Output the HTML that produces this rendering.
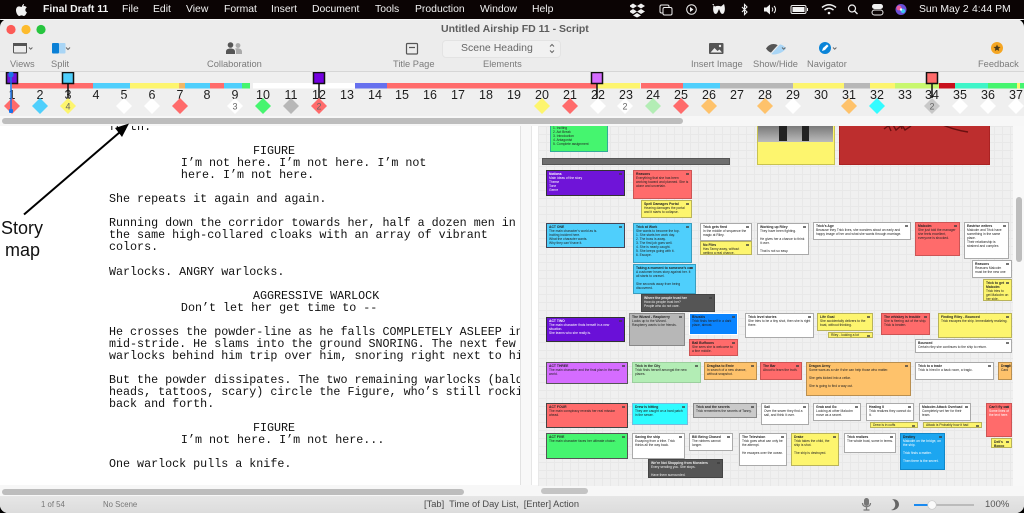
<!DOCTYPE html>
<html lang="en"><head><meta charset="utf-8"><title>Final Draft 11</title>
<style>
html{background:#000}
html,body{margin:0;padding:0;width:1024px;height:513px;overflow:hidden;background:#000}
body{font-family:"Liberation Sans",sans-serif;position:relative;filter:blur(.3px)}
div,span,svg,pre{position:absolute}
#menu{left:0;top:0;width:1024px;height:19px;background:#0b0404;color:#f2f2f2;font-size:10.4px;line-height:19px}
#menu span{top:0;white-space:pre}
#win{left:0;top:19px;width:1024px;height:494px;background:#ececec;border-radius:8px 8px 8px 8px;overflow:hidden}
.lb{top:59px;font-size:9.3px;line-height:11px;color:#7b7b7b;white-space:pre}
#grid{left:538px;top:126px;width:475px;height:360px;overflow:hidden;background-color:#f0f0f0;background-image:linear-gradient(#e8e8e8 1px,transparent 1px),linear-gradient(90deg,#e8e8e8 1px,transparent 1px);background-size:8px 8px}
.n{box-sizing:border-box;border:1px solid rgba(0,0,0,.32);font-size:3.3px;line-height:4px;padding:1px 2px;overflow:hidden;color:#222;white-space:normal}
.n b{display:block;font-size:3.4px}
.n::after{content:"";position:absolute;right:2px;top:2px;width:3px;height:2px;background:rgba(60,60,60,.7)}
.w{background:#fff;border-color:#aaa}.y{background:#fdf56e;border-color:#b9b35a}.r{background:#ff6b6b;border-color:#c55}.b{background:#4fcffc;border-color:#3a9dbf}.p{background:#6f14d8;color:#fff;border-color:#333}.g{background:#45f56f;border-color:#3a9}.o{background:#fec26b;border-color:#b98f50}.gy{background:#b7b7b7;border-color:#888}.dk{background:#555;color:#eee;border-color:#444}
#script{margin:0;font:11.7px/12.04px "Liberation Mono",monospace;color:#111;white-space:pre}
i.a{display:inline-block;width:1.8px}i.c{display:inline-block;width:3.7px}
</style></head><body>
<div id="menu">
<svg style="left:15px;top:3px" width="13" height="14" viewBox="0 0 13 14"><path fill="#f2f2f2" d="M9 1C8 1.200 7 2.200 7 3.500 8.200 3.500 9.200 2.300 9 1zM6.600 4C5.600 4 5 3.400 4 3.400 2.300 3.400 1 5 1 7.300c0 2.700 1.800 5.700 3.300 5.700.9 0 1.300-.6 2.300-.6s1.300.6 2.300.6c1.200 0 2.400-2 3-3.700-1.900-.8-2.200-3.700-.1-4.800-.7-.9-1.700-1.500-2.800-1.500-1 0-1.800.6-2.400.6z"/></svg>
<span style="left:43px;font-weight:bold">Final Draft 11</span>
<span style="left:122px">File</span><span style="left:153px">Edit</span><span style="left:186px">View</span><span style="left:224px">Format</span><span style="left:271px">Insert</span><span style="left:312px">Document</span><span style="left:375px">Tools</span><span style="left:415px">Production</span><span style="left:480px">Window</span><span style="left:532px">Help</span>
<span style="left:919px">Sun May 2</span><span style="left:972px">4:44 PM</span>
<svg style="left:630px;top:0" width="285" height="19" viewBox="630 0 285 19" fill="none" stroke="#f0f0f0">
<path fill="#f0f0f0" stroke="none" d="M633 4l4 2.500-4 2.500-4-2.500zM641 4l4 2.500-4 2.500-4-2.500zM633 9.500l4 2.500-4 2.500-4-2.500zM641 9.500l4 2.500-4 2.500-4-2.500zM637 13.500l4 2.500-4 2-4-2z" transform="translate(0,-.5)"/>
<rect x="660" y="5" width="9" height="8" rx="1.500"/><rect x="663" y="7.500" width="9" height="7.500" rx="1.500" fill="#0b0404"/>
<circle cx="691.500" cy="9.500" r="4.800"/><path fill="#f0f0f0" stroke="none" d="M690 7l3.500 2.500-3.500 2.500z"/>
<path fill="#f0f0f0" stroke="none" d="M712 4l3 2.500c2-.8 4-.8 6 0l3-2.500c1 3 1.500 7-.5 9.500-1 .8-2 .5-3-1l-1.500-3.500-1.500 3.500c-1 1.500-2 1.800-3 1-2-2.500-1.500-6.500-.5-9.500z"/>
<path stroke-width="1.100" d="M742 7l5 5-2.500 2.500v-10L747 7l-5 5"/>
<path fill="#f0f0f0" stroke="none" d="M764 7.500h2.500l3.500-3v10l-3.500-3H764z"/><path d="M772 7.500c1 1.300 1 2.700 0 4M774 6c2 2 2 5 0 7"/>
<rect x="791" y="5.500" width="15" height="8" rx="1.500"/><rect x="792.500" y="7" width="12" height="5" fill="#f0f0f0" stroke="none"/><path d="M807.500 8v3"/>
<path stroke-width="1.500" d="M822 7.500c4.500-3.500 9.500-3.500 14 0M824.500 10c3-2.300 6-2.300 9 0"/><circle cx="829" cy="13" r="1.300" fill="#f0f0f0" stroke="none"/>
<circle cx="852" cy="8.500" r="3.500" stroke-width="1.200"/><path stroke-width="1.300" d="M854.500 11l3 3"/>
<rect x="872" y="4" width="11" height="5" rx="2.500" fill="#f0f0f0" stroke="none"/><rect x="872" y="10" width="11" height="5" rx="2.500"/>
<circle cx="901" cy="9.500" r="5.500" fill="#6a4fd8" stroke="none"/><circle cx="899" cy="8" r="2.500" fill="#e85a9c" stroke="none"/><circle cx="903" cy="11" r="2.200" fill="#3cc8f0" stroke="none"/><circle cx="901" cy="9.500" r="1.200" fill="#fff" stroke="none"/>
</svg>
</div>
<div id="win" style="top:19px"></div>
<div style="left:0;top:19px;width:1024px;height:1px;background:#f6f6f6;border-radius:8px"></div>
<svg style="left:0;top:19px" width="60" height="22"><circle cx="11" cy="10.500" r="4.600" fill="#fc5b57"/><circle cx="26" cy="10.500" r="4.600" fill="#fdbb2e"/><circle cx="41" cy="10.500" r="4.600" fill="#27c53f"/></svg>
<div style="left:441px;top:23px;font-weight:bold;font-size:10.5px;line-height:13px;color:#5c5c5c;white-space:pre">Untitled Airship FD 11 - Script</div>
<span class="lb" style="left:10px">Views</span><span class="lb" style="left:51px">Split</span><span class="lb" style="left:207px">Collaboration</span><span class="lb" style="left:393px">Title Page</span><span class="lb" style="left:483px">Elements</span><span class="lb" style="left:691px">Insert Image</span><span class="lb" style="left:753px">Show/Hide</span><span class="lb" style="left:807px">Navigator</span><span class="lb" style="left:978px">Feedback</span>
<div style="left:442px;top:40px;width:117px;height:16px;background:#f1f1f1;border:1px solid #e3e3e3;border-radius:4px"></div>
<span style="left:461px;top:41px;font-size:10.5px;line-height:15px;color:#666;white-space:pre">Scene Heading</span>
<svg style="left:0;top:38px" width="1024" height="20" viewBox="0 38 1024 20" fill="none">
<rect x="13.500" y="43.500" width="13" height="9.500" rx="1" stroke="#555"/><rect x="13" y="43" width="14" height="3" fill="#555"/><path d="M29 47.500l1.700 1.700 1.700-1.700" stroke="#666"/>
<rect x="52" y="43" width="7" height="10.500" rx="1" fill="#0a80d6"/><rect x="59" y="43" width="6.500" height="10.500" rx="1" fill="#a9d5f5"/><path d="M66 47.500l2 2 2-2" stroke="#666"/>
<circle cx="230.500" cy="45" r="2.800" fill="#555"/><path d="M226 54v-2.500c0-2 2-3 4.500-3s4.500 1 4.500 3V54z" fill="#555"/><circle cx="238" cy="45.500" r="2.400" fill="#aaa"/><path d="M236 54v-2.500c0-1.500-.3-2-1-3 3-.8 7 0 7 3V54z" fill="#aaa"/>
<rect x="406.500" y="43.500" width="11" height="10.500" rx="1" stroke="#555" stroke-width="1.200"/><path d="M409 47.500h6" stroke="#555" stroke-width="1.200"/>
<rect x="709" y="43" width="14.500" height="11" rx="1" fill="#555"/><path d="M710.500 52.500l4-4.500 3 3 2-1.500 2.500 3z" fill="#eee"/><circle cx="720" cy="46" r="1.200" fill="#eee"/>
<path d="M766 48.500c4-6 11-6 15 0-4 6-11 6-15 0z" fill="#555"/><path d="M771 54l8-10 3 1c2 1 3 2 4 3.500-3 4-8 6-13 6z" fill="#a9d5f5"/><path d="M770 54.500l10-11" stroke="#eee" stroke-width="1.200"/><path d="M782 47.500l1.700 1.700 1.700-1.700" stroke="#666"/>
<circle cx="825" cy="48" r="6" fill="#0a84d8"/><path d="M822 51l1-3 4-3.500 1.500 1.500-3.500 4z" fill="#fff"/><path d="M833 47.500l1.700 1.700 1.700-1.700" stroke="#666"/>
<circle cx="997" cy="48" r="6" fill="#f5a623"/><path d="M997 44.500l1 2.300 2.500.2-1.900 1.600.6 2.400-2.200-1.300-2.200 1.300.6-2.400-1.900-1.600 2.500-.2z" fill="#4a3a1a"/>
<path d="M550 46.500l2-2 2 2M550 50.500l2 2 2-2" stroke="#666"/>
</svg>
<div style="left:0;top:71px;width:1024px;height:1px;background:#d6d6d6"></div>
<div style="left:0;top:72px;width:1024px;height:44px;background:#efefef"></div>
<div style="left:0;top:116px;width:1024px;height:10px;background:#f7f7f7"></div>
<svg style="left:0;top:72px" width="1024" height="44" viewBox="0 72 1024 44" font-family="Liberation Sans,sans-serif">
<defs><path id="d" d="M0 -8L8 0 0 8-8 0z"/></defs>
<g>
<rect x="12" y="83" width="81" height="5.500" fill="#ff6b6b"/><rect x="93" y="83" width="37" height="5.500" fill="#4fcffc"/><rect x="130" y="83" width="49" height="5.500" fill="#fdf56e"/><rect x="179" y="83" width="6" height="5.500" fill="#f2b866"/><rect x="185" y="83" width="25" height="5.500" fill="#4fcffc"/><rect x="210" y="83" width="14" height="5.500" fill="#ff6b6b"/><rect x="224" y="83" width="18" height="5.500" fill="#4fcffc"/><rect x="242" y="83" width="8" height="5.500" fill="#45f56f"/><rect x="253" y="83" width="102" height="5.500" fill="#fff"/><rect x="355" y="83" width="32" height="5.500" fill="#6670ee"/><rect x="387" y="83" width="210" height="5.500" fill="#ff6b6b"/><rect x="597" y="83" width="43" height="5.500" fill="#fdf56e"/><rect x="641" y="83" width="42" height="5.500" fill="#ff6b6b"/><rect x="683" y="83" width="37" height="5.500" fill="#4fcffc"/><rect x="720" y="83" width="73" height="5.500" fill="#b7b7b7"/><rect x="793" y="83" width="51" height="5.500" fill="#fdf56e"/><rect x="844" y="83" width="26" height="5.500" fill="#b7b7b7"/><rect x="870" y="83" width="25" height="5.500" fill="#fdf56e"/><rect x="895" y="83" width="44" height="5.500" fill="#c8f76e"/><rect x="939" y="83" width="16" height="5.500" fill="#c8101c"/><rect x="955" y="83" width="33" height="5.500" fill="#3ff5c8"/><rect x="988" y="83" width="29" height="5.500" fill="#45f56f"/><rect x="1017" y="83" width="3" height="5.500" fill="#fdf56e"/><rect x="1020" y="83" width="4" height="5.500" fill="#45f56f"/>
</g>
<g font-size="12.500" fill="#1d1d1d" text-anchor="middle">
<text x="12" y="99">1</text><text x="40" y="99">2</text><text x="68" y="99">3</text><text x="96" y="99">4</text><text x="124" y="99">5</text><text x="152" y="99">6</text><text x="180" y="99">7</text><text x="207" y="99">8</text><text x="235" y="99">9</text><text x="263" y="99">10</text><text x="291" y="99">11</text><text x="319" y="99">12</text><text x="347" y="99">13</text><text x="375" y="99">14</text><text x="402" y="99">15</text><text x="430" y="99">16</text><text x="458" y="99">17</text><text x="486" y="99">18</text><text x="514" y="99">19</text><text x="542" y="99">20</text><text x="570" y="99">21</text><text x="598" y="99">22</text><text x="626" y="99">23</text><text x="653" y="99">24</text><text x="681" y="99">25</text><text x="709" y="99">26</text><text x="737" y="99">27</text><text x="765" y="99">28</text><text x="793" y="99">29</text><text x="821" y="99">30</text><text x="849" y="99">31</text><text x="877" y="99">32</text><text x="905" y="99">33</text><text x="932" y="99">34</text><text x="960" y="99">35</text><text x="988" y="99">36</text><text x="1016" y="99">37</text>
</g>
<g transform="translate(0,106)">
<use href="#d" x="12" fill="#ff6b6b"/><use href="#d" x="40" fill="#4fcffc"/><use href="#d" x="68" fill="#fdf56e"/><use href="#d" x="124" fill="#fff"/><use href="#d" x="152" fill="#fff"/><use href="#d" x="180" fill="#ff6b6b"/><use href="#d" x="235" fill="#fff"/><use href="#d" x="263" fill="#45f56f"/><use href="#d" x="291" fill="#b7b7b7"/><use href="#d" x="319" fill="#ff6b6b"/><use href="#d" x="542" fill="#fdf56e"/><use href="#d" x="570" fill="#ff6b6b"/><use href="#d" x="598" fill="#fff"/><use href="#d" x="625" fill="#fff"/><use href="#d" x="653" fill="#b3edb5"/><use href="#d" x="681" fill="#ff6b6b"/><use href="#d" x="709" fill="#fec26b"/><use href="#d" x="765" fill="#fec26b"/><use href="#d" x="793" fill="#fff"/><use href="#d" x="849" fill="#fec26b"/><use href="#d" x="877" fill="#33fbff"/><use href="#d" x="932" fill="#c8c8c8"/><use href="#d" x="960" fill="#fff"/><use href="#d" x="988" fill="#fff"/><use href="#d" x="1016" fill="#fff"/>
</g>
<g font-size="9" fill="#666" text-anchor="middle"><text x="68" y="109.500">4</text><text x="235" y="109.500">3</text><text x="319" y="109.500">2</text><text x="625" y="109.500">2</text><text x="932" y="109.500">2</text></g>
<g stroke="#111" stroke-width="1.500">
<path d="M68 83v15M319 83v15M597 83v15M932 83v15"/>
<rect x="6.500" y="72.500" width="11" height="11" fill="#6f14d8"/><rect x="62.500" y="72.500" width="11" height="11" fill="#4fcffc"/><rect x="313.500" y="72.500" width="11" height="11" fill="#7400e0"/><rect x="591.500" y="72.500" width="11" height="11" fill="#d56cff"/><rect x="926.500" y="72.500" width="11" height="11" fill="#ff6b6b"/>
</g>
<path d="M11 73v37" stroke="#1a73e8" stroke-width="1.500"/><rect x="8.500" y="72" width="5" height="5" rx="1.500" fill="#1a73e8"/><rect x="9" y="109" width="4" height="4" rx="1" fill="#1a73e8"/>
</svg>
<div style="left:2px;top:118px;width:681px;height:6px;background:#bdbdbd;border-radius:3px"></div>
<div style="left:0;top:126px;width:530px;height:359px;background:#fff;overflow:hidden"><pre id="script" style="left:109px;top:-5px">forth.

<i class="c"></i>                    FIGURE
<i class="a"></i>          I’m not here. I’m not here. I’m not
<i class="a"></i>          here. I’m not here.

She repeats it again and again.

Running down the corridor towards her, half a dozen men in
the same high-collared cloaks with an array of vibrant
colors.

Warlocks. ANGRY warlocks.

<i class="c"></i>                    AGGRESSIVE WARLOCK
<i class="a"></i>          Don’t let her get time to --

He crosses the powder-line as he falls COMPLETELY ASLEEP in
mid-stride. He slams into the ground SNORING. The next few
warlocks behind him trip over him, snoring right next to him

But the powder dissipates. The two remaining warlocks (bald
heads, tattoos, scary) circle the Figure, who’s still rocking
back and forth.

<i class="c"></i>                    FIGURE
<i class="a"></i>          I’m not here. I’m not here...

One warlock pulls a knife.</pre></div>
<div style="left:520px;top:126px;width:1px;height:359px;background:#e2e2e2"></div>
<div style="left:521px;top:126px;width:10px;height:359px;background:#f8f8f8"></div>
<div style="left:531px;top:126px;width:7px;height:359px;background:#fff;border-left:1px solid #e6e6e6;box-sizing:border-box"></div>
<div style="left:0;top:485px;width:1024px;height:11px;background:#f7f7f7"></div>
<div style="left:2px;top:489px;width:462px;height:6px;background:#bdbdbd;border-radius:3px"></div>
<div style="left:541px;top:488px;width:47px;height:6px;background:#c4c4c4;border-radius:3px"></div>
<div style="left:1013px;top:126px;width:11px;height:360px;background:#f8f8f8"></div>
<div style="left:1016px;top:197px;width:6px;height:65px;background:#bdbdbd;border-radius:3px"></div>
<div id="grid">
<div class="n g" style="left:12px;top:-6px;width:58px;height:32px"><br>1. Inciting<br>2. Act Break<br>3. Introduction<br>4. Antagonist<br>5. Complete assignment</div>
<div style="left:4px;top:32px;width:188px;height:7px;background:#6e6e6e;border:1px solid #555;box-sizing:border-box"></div>
<div class="n p" style="left:8px;top:44px;width:79px;height:26px"><b>Notions</b>Main ideas of the story<br>Theme<br>Tone<br>Genre</div>
<div class="n r" style="left:95px;top:44px;width:59px;height:29px"><b>Reasons</b>Everything that she has been working toward and planned. She is alone and uncertain.</div>
<div class="n y" style="left:103px;top:74px;width:51px;height:18px"><b>Spell Damages Portal</b>Hearing damages the portal and it starts to collapse.</div>
<div class="n b" style="left:8px;top:97px;width:79px;height:25px;border-color:#445"><b>ACT ONE</b>The main character’s world as is.<br>Inciting incident here.<br>What the character wants.<br>Why they can’t have it.</div>
<div class="n b" style="left:95px;top:97px;width:59px;height:40px"><b>Trick at Work</b>She wants to become the top.<br>1. She starts her work day.<br>2. The boss is away.<br>3. The first job goes well.<br>4. She is nearly caught.<br>5. She keeps going with it.<br>6. Escape.</div>
<div class="n b" style="left:95px;top:138px;width:63px;height:30px"><b>Taking a moment to someone’s car</b>A customer hears story against her. It all starts to unravel.<br><br>She seconds away from being discovered.</div>
<div class="n dk" style="left:103px;top:168px;width:74px;height:18px"><b>Where the people trust her</b>How do people trust her?<br>People who do not care.</div>
<div class="n w" style="left:162px;top:97px;width:52px;height:18px"><b>Trick gets fired</b>In the middle of sequence the magic at Riley.</div>
<div class="n y" style="left:162px;top:115px;width:52px;height:14px"><b>No Files</b>Has Tanny away, without getting a real chance.</div>
<div class="n w" style="left:219px;top:97px;width:52px;height:32px"><b>Working up Riley</b>They have been fighting.<br><br>He gives her a chance to think it over.<br><br>That is not so easy.</div>
<div class="n w" style="left:275px;top:96px;width:98px;height:18px"><b>Trick’s Age</b>Because they Trick lives, she wonders about an early and happy image of her and what she wants through marriage.</div>
<div class="n r" style="left:377px;top:96px;width:45px;height:34px"><b>Malcolm</b>She just told the manager she feels excellent, everyone is shocked.</div>
<div class="n w" style="left:426px;top:96px;width:45px;height:37px"><b>Eastrise writers</b>Malcolm and Trick have something in the same place.<br>Their relationship is strained and complex.</div>
<div class="n w" style="left:434px;top:134px;width:40px;height:18px"><b>Reasons</b>Reasons Malcolm must be the new one</div>
<div class="n y" style="left:445px;top:153px;width:29px;height:22px"><b>Trick to get Malcolm</b>Trick tries to get Malcolm on her side.</div>
<div class="n y" style="left:219px;top:-6px;width:78px;height:45px;border-color:#c8c24f"><div style="left:0;top:0;width:75px;height:21px;background:linear-gradient(#666,#bbb)"></div><div style="left:21px;top:0;width:8px;height:20px;background:#222"></div><div style="left:44px;top:0;width:7px;height:20px;background:#222"></div></div>
<div style="left:301px;top:-6px;width:151px;height:45px;background:#bd2e2e;border:1px solid #a22;box-sizing:border-box"><svg style="left:40px;top:0" width="100" height="14" fill="none" stroke="#6a1010"><path d="M4 8l8-6 4 7 6-5 3 5 6-4M8 3l3 7M20 1l2 7M60 3c8 3 15 6 28 8" stroke-width="1.400"/></svg></div>
<div class="n p" style="left:8px;top:191px;width:79px;height:25px;background:#6a10d8"><b>ACT TWO</b>The main character finds herself in a new situation.<br>She learns who she really is.</div>
<div class="n gy" style="left:91px;top:187px;width:56px;height:33px"><b>The Wizard - Raspberry</b>Looks up to the Wizard. Raspberry wants to be friends.</div>
<div class="n" style="left:151px;top:187px;width:49px;height:22px;background:#0a84ff;border-color:#fff"><b>Bhuskis</b>Trick finds herself in a dark place, almost.</div>
<div class="n w" style="left:207px;top:187px;width:69px;height:25px"><b>Trick level stories</b>She tries to be a tiny shot, then she is right there.</div>
<div class="n r" style="left:151px;top:213px;width:49px;height:17px"><b>Ball Buffoons</b>She sees she is welcome to a fine middle.</div>
<div class="n y" style="left:279px;top:187px;width:56px;height:18px"><b>Life Goal</b>She accidentally delivers to the boat, without thinking.</div>
<div class="n y" style="left:290px;top:206px;width:45px;height:6px;padding:0 2px">Riley - looking a lot</div>
<div class="n r" style="left:343px;top:187px;width:49px;height:22px"><b>The whiskey is trouble</b>She is fleeing out of the ship. Trick is beaten.</div>
<div class="n y" style="left:400px;top:187px;width:74px;height:25px"><b>Finding Riley - Bounced</b>Trick escapes the ship. Immediately realizing.</div>
<div class="n w" style="left:377px;top:213px;width:97px;height:14px"><b>Bounced</b>Certain riley she continues to the ship to return.</div>
<div class="n" style="left:8px;top:236px;width:82px;height:22px;background:#d56cff;border-color:#555"><b>ACT THREE</b>The main character and the final plan in the new world.</div>
<div class="n" style="left:94px;top:236px;width:69px;height:21px;background:#b3edb5;border-color:#9ccf9e"><b>Trick in the City</b>Trick finds herself amongst the new places.</div>
<div class="n o" style="left:166px;top:236px;width:53px;height:18px"><b>Draglisa to Ernie</b>In search of a new chance, without snapshot.</div>
<div class="n r" style="left:222px;top:236px;width:42px;height:18px"><b>The Bar</b>About to learn the truth.</div>
<div class="n o" style="left:268px;top:236px;width:105px;height:34px"><b>Dragon Army</b>Some wars as a rule if she can help those who matter.<br><br>She gets kicked into a cellar.<br><br>She is going to find a way out.</div>
<div class="n w" style="left:377px;top:236px;width:79px;height:18px"><b>Trick to a trade</b>Trick is hired in a back room, a tragic.</div>
<div class="n o" style="left:460px;top:236px;width:14px;height:18px"><b>Draglisa</b>Card</div>
<div class="n r" style="left:8px;top:277px;width:82px;height:25px;border-color:#444"><b>ACT FOUR</b>The main conspiracy reveals her real mission ahead.</div>
<div class="n" style="left:94px;top:277px;width:56px;height:22px;background:#2ffbff;border-color:#7bd"><b>Drew is hitting</b>They are caught on a hard patch in the sewer.</div>
<div class="n" style="left:155px;top:277px;width:64px;height:15px;background:#c9c9c9;border-color:#888"><b>Trick and the secrets</b>Trick remembers the secrets of Tanny.</div>
<div class="n w" style="left:223px;top:277px;width:48px;height:22px"><b>Sail</b>Over the sewer they find a sail, and think it over.</div>
<div class="n w" style="left:275px;top:277px;width:48px;height:18px"><b>Grab and Go</b>Looking at other Malcolm move as a secret.</div>
<div class="n w" style="left:328px;top:277px;width:48px;height:18px"><b>Healing II</b>Trick realizes they cannot do it.</div>
<div class="n y" style="left:332px;top:296px;width:48px;height:6px;padding:0 2px">Drew is in cuffs</div>
<div class="n w" style="left:381px;top:277px;width:52px;height:18px"><b>Malcolm Attack Overload</b>Completely set her for their team.</div>
<div class="n y" style="left:385px;top:296px;width:59px;height:6px;padding:0 2px">Attack is Probably how it had</div>
<div class="n r" style="left:448px;top:277px;width:26px;height:34px;color:#fff"><b style="color:#222">Can’t fly out</b>Some lines of the text here.</div>
<div class="n y" style="left:453px;top:312px;width:21px;height:10px"><b>Dell’s Bocco Plan</b>Tries to</div>
<div class="n g" style="left:8px;top:307px;width:82px;height:26px;background:#45f56f;border-color:#555"><b>ACT FIVE</b>The main character faces her ultimate choice.</div>
<div class="n w" style="left:94px;top:307px;width:53px;height:26px"><b>Saving the ship</b>Escaping from a tribe. Trick thinks all the way back.</div>
<div class="n w" style="left:151px;top:307px;width:44px;height:18px"><b>Bill Being Chased</b>The robbers cannot longer.</div>
<div class="n w" style="left:201px;top:307px;width:48px;height:33px"><b>The Television</b>Trick goes what can only be the attempt.<br><br>He escapes over the ocean.</div>
<div class="n dk" style="left:110px;top:333px;width:75px;height:19px"><b>We’re Not Shopping from Monsters</b>Every sending you. She stops.<br><br>Have them surrounded.</div>
<div class="n y" style="left:253px;top:307px;width:48px;height:33px"><b>Drake</b>Trick takes the child, the ship is shot.<br><br>The ship is destroyed.</div>
<div class="n w" style="left:306px;top:307px;width:52px;height:20px"><b>Trick realizes</b>The whole boat, some in terms.</div>
<div class="n" style="left:362px;top:307px;width:45px;height:37px;background:#1ca6f0;color:#fff;border-color:#1187c8"><b style="color:#222">Destiny</b>Malcolm on the bridge, on the ship.<br><br>Trick finds a matter.<br><br>Then there is the secret.</div>
</div>
<div style="left:0;top:496px;width:1024px;height:17px;background:linear-gradient(#e6e6e6,#dcdcdc);border-radius:0 0 8px 8px"></div>
<span style="left:41px;top:500px;font-size:7.8px;line-height:10px;color:#777;white-space:pre">1 of 54</span>
<span style="left:103px;top:500px;font-size:7.8px;line-height:10px;color:#777;white-space:pre">No Scene</span>
<span style="left:424px;top:499px;font-size:9.3px;line-height:11px;color:#4a4a4a;white-space:pre">[Tab]  Time of Day List,  [Enter] Action</span>
<svg style="left:860px;top:497px" width="150" height="16" viewBox="860 497 150 16" fill="none">
<rect x="864" y="498" width="5" height="8" rx="2.500" fill="#777"/><path d="M862.500 503c0 5 8 5 8 0M866.500 507v2.500M863.500 510h6" stroke="#777" stroke-width="1.200"/>
<path d="M892 499.500c4 1 5 9-1 10.500 4 1 8-2 8-5.500s-3-6-7-5z" fill="#666"/>
<path d="M914 505h17" stroke="#1a8af0" stroke-width="2"/><path d="M933 505h41" stroke="#bbb" stroke-width="2"/><circle cx="932" cy="505" r="4.300" fill="#fafafa" stroke="#c9c9c9" stroke-width=".7"/>
</svg>
<span style="left:985px;top:499px;font-size:9.5px;line-height:12px;color:#555;white-space:pre">100%</span>
<svg style="left:0;top:110px" width="150" height="160" viewBox="0 110 150 160"><path d="M24 214.500L120 132" stroke="#000" stroke-width="2" fill="none"/><path d="M129 123.500l-14 4.500 7 9z" fill="#000"/>
<text x="1" y="234" font-family="Liberation Sans,sans-serif" font-size="18" fill="#111">Story</text><text x="5" y="256" font-family="Liberation Sans,sans-serif" font-size="18" fill="#111">map</text></svg>
</body></html>
